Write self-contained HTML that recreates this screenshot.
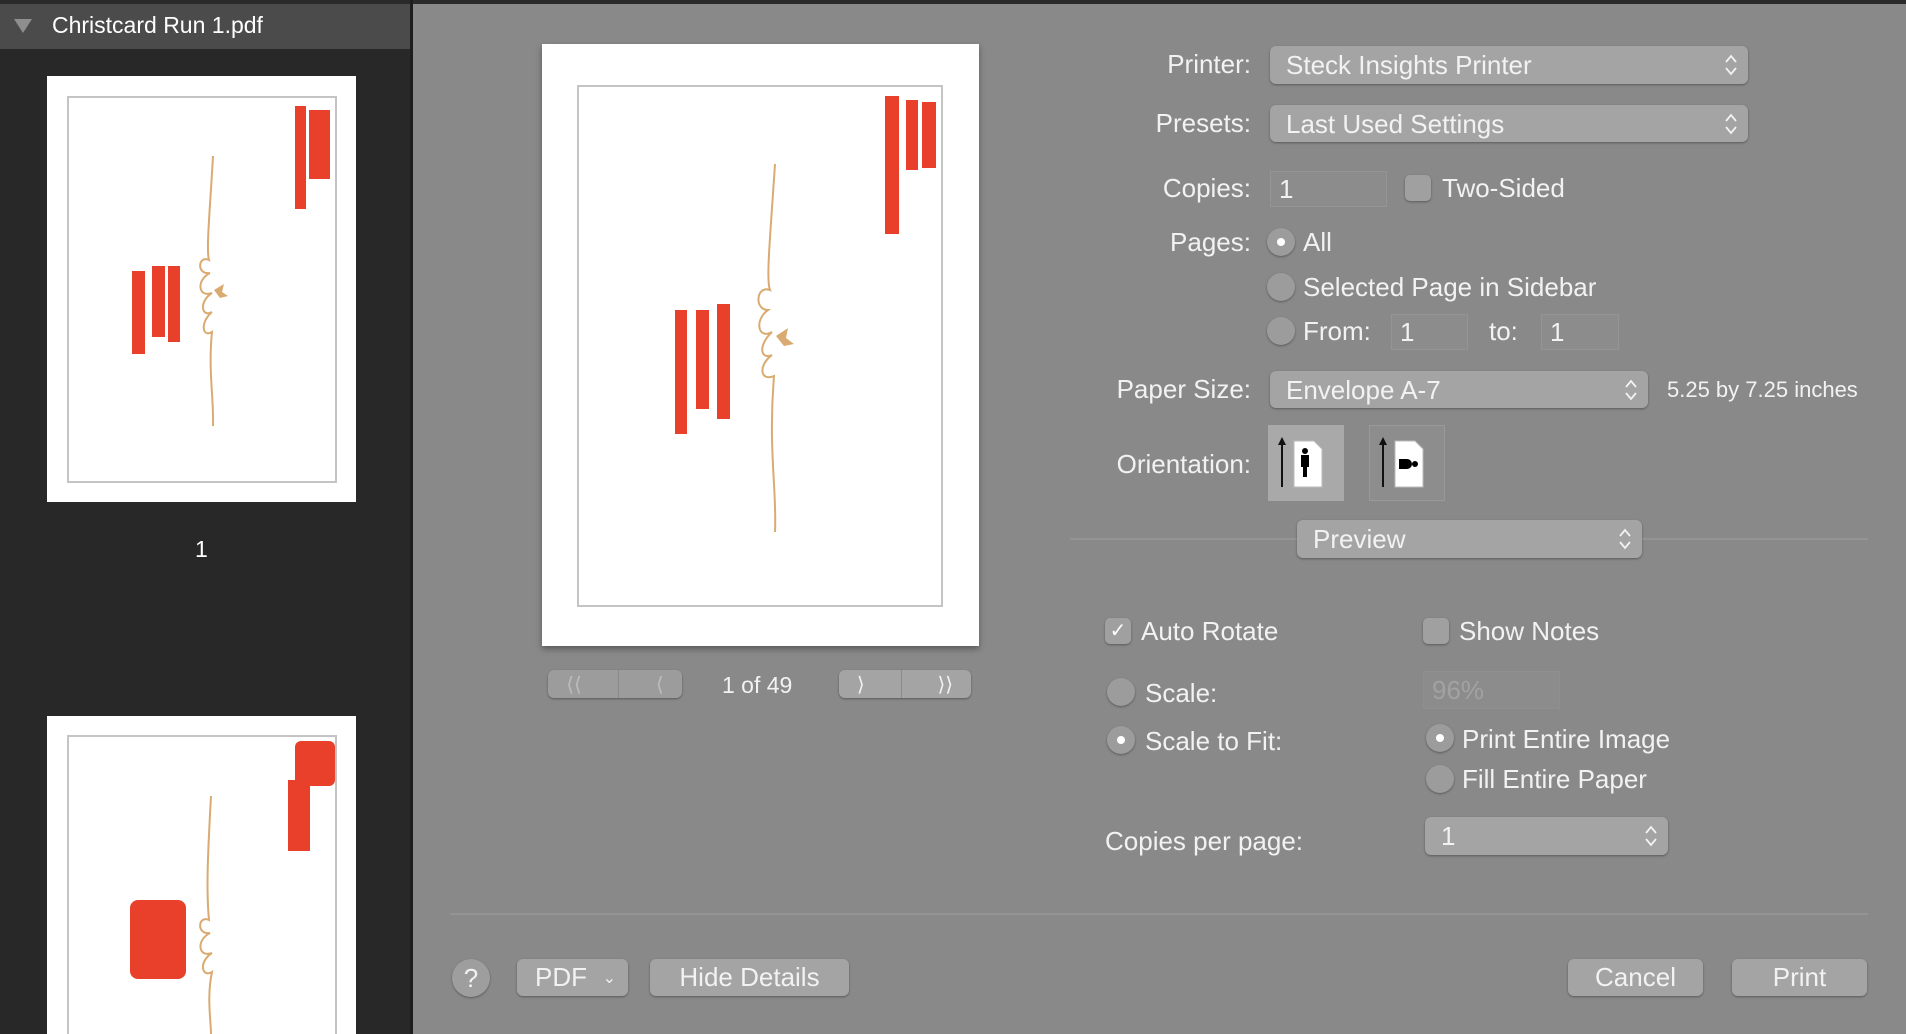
<!DOCTYPE html>
<html style="width:1906px;height:1034px;overflow:hidden"><head><meta charset="utf-8"><style>
*{margin:0;padding:0;box-sizing:border-box}
body{width:1906px;height:1034px;overflow:hidden;background:#898989;font-family:"Liberation Sans",sans-serif;color:#f2f2f2;position:relative}
.a{position:absolute}
.lbl{position:absolute;font-size:26px;white-space:nowrap}
.r{text-align:right;width:300px}
.pop{position:absolute;background:#a4a4a4;border-radius:6px;box-shadow:0 1px 2px rgba(0,0,0,.35);font-size:26px;padding-left:16px;line-height:1;display:flex;align-items:center}
.pop .ar{position:absolute;right:10px;top:50%;transform:translateY(-50%);width:14px;height:26px}
.fld{position:absolute;background:#8c8c8c;border:1px solid #959595;font-size:26px;padding-left:8px;display:flex;align-items:center}
.cb{position:absolute;width:26px;height:26px;background:#a0a0a0;border-radius:5px;box-shadow:0 1px 2px rgba(0,0,0,.35)}
.rd{position:absolute;width:28px;height:28px;border-radius:50%;background:#9c9c9c;box-shadow:0 1px 2px rgba(0,0,0,.35)}
.rd.on::after{content:"";position:absolute;left:10px;top:10px;width:8px;height:8px;border-radius:50%;background:#fff}
.btn{position:absolute;background:#a4a4a4;border-radius:6px;box-shadow:0 1px 2px rgba(0,0,0,.35);font-size:26px;display:flex;align-items:center;justify-content:center}
.red{position:absolute;background:#e8402a}
</style></head><body>
<div class="a" style="left:0;top:0;width:1906px;height:4px;background:#2a2a2a"></div>
<div class="a" style="left:0;top:4px;width:410px;height:1030px;background:#282828;overflow:hidden">
<div class="a" style="left:0;top:0;width:410px;height:45px;background:#4b4b4b"></div>
<div class="a" style="left:47px;top:712px;width:309px;height:330px;background:#fff"></div>
<div class="a" style="left:67px;top:731px;width:270px;height:320px;border:2px solid #c4c4c4"></div>
<div class="red" style="left:295px;top:737px;width:40px;height:45px;border-radius:6px"></div>
<div class="red" style="left:288px;top:776px;width:22px;height:71px"></div>
<div class="red" style="left:130px;top:896px;width:56px;height:79px;border-radius:8px"></div>
<svg class="a" style="left:190px;top:786px" width="50" height="250"><path d="M21 6 C18 60 16 100 19 130 C8 125 6 145 20 143 C6 150 8 168 22 163 C8 172 12 188 22 182 C16 210 22 235 21 250" fill="none" stroke="#d9ab70" stroke-width="2"/></svg>
</div>
<div class="a" style="left:410px;top:0;width:3px;height:1034px;background:#1e1e1e"></div>
<div class="a" style="left:14px;top:19px;width:0;height:0;border-left:9px solid transparent;border-right:9px solid transparent;border-top:14px solid #8e8e8e"></div>
<div class="lbl" style="left:52px;top:12px;font-size:23px;color:#fff">Christcard Run 1.pdf</div>
<div class="a" style="left:47px;top:76px;width:309px;height:426px;background:#fff"></div>
<div class="a" style="left:67px;top:96px;width:270px;height:387px;border:2px solid #c4c4c4"></div>
<div class="red" style="left:295px;top:106px;width:11px;height:103px"></div>
<div class="red" style="left:309px;top:110px;width:21px;height:69px"></div>
<div class="red" style="left:132px;top:271px;width:13px;height:83px"></div>
<div class="red" style="left:152px;top:266px;width:13px;height:71px"></div>
<div class="red" style="left:168px;top:266px;width:12px;height:76px"></div>
<svg class="a" style="left:190px;top:150px" width="50" height="280"><path d="M23 6 C20 60 16 100 19 110 C8 105 6 125 20 123 C6 130 8 148 22 143 C8 152 12 168 22 162 C10 172 12 188 22 182 C18 220 24 250 23 276" fill="none" stroke="#d9ab70" stroke-width="2"/><path d="M24 140 l10 -6 l-2 8 l6 4 l-8 2 z" fill="#d9ab70"/></svg>
<div class="lbl" style="left:195px;top:536px;font-size:23px;color:#fff">1</div>
<div class="a" style="left:542px;top:44px;width:437px;height:602px;background:#fff;box-shadow:0 3px 6px rgba(0,0,0,.35)"></div>
<div class="a" style="left:577px;top:85px;width:366px;height:522px;border:2px solid #c4c4c4"></div>
<div class="red" style="left:885px;top:96px;width:14px;height:138px"></div>
<div class="red" style="left:906px;top:100px;width:12px;height:70px"></div>
<div class="red" style="left:922px;top:102px;width:14px;height:66px"></div>
<div class="red" style="left:675px;top:310px;width:12px;height:124px"></div>
<div class="red" style="left:696px;top:310px;width:13px;height:99px"></div>
<div class="red" style="left:717px;top:304px;width:13px;height:115px"></div>
<svg class="a" style="left:750px;top:160px" width="60" height="375"><path d="M25 4 C20 80 16 120 20 130 C6 125 4 150 18 150 C4 160 8 180 22 172 C8 185 10 200 22 195 C8 205 10 222 24 216 C18 290 27 330 25 372" fill="none" stroke="#d9ab70" stroke-width="2"/><path d="M26 176 l12 -8 l-2 10 l8 6 l-10 2 z" fill="#d9ab70"/></svg>
<div class="btn" style="left:548px;top:670px;width:134px;height:28px;background:#9c9c9c;color:#bcbcbc;font-size:20px;justify-content:space-around">&#10216;&#10216;<span style="width:1px;height:28px;background:#8a8a8a"></span>&#10216;</div>
<div class="lbl" style="left:722px;top:672px;font-size:23px">1 of 49</div>
<div class="btn" style="left:839px;top:670px;width:132px;height:28px;font-size:20px;justify-content:space-around">&#10217;<span style="width:1px;height:28px;background:#8a8a8a"></span>&#10217;&#10217;</div>
<div class="lbl r" style="left:951px;top:49px">Printer:</div>
<div class="lbl r" style="left:951px;top:108px">Presets:</div>
<div class="lbl r" style="left:951px;top:173px">Copies:</div>
<div class="lbl r" style="left:951px;top:227px">Pages:</div>
<div class="lbl r" style="left:951px;top:374px">Paper Size:</div>
<div class="lbl r" style="left:951px;top:449px">Orientation:</div>
<svg width="0" height="0" style="position:absolute"><defs><symbol id="ud" viewBox="0 0 14 26"><path d="M2 10 L7 4 L12 10 M2 16 L7 22 L12 16" fill="none" stroke="#f2f2f2" stroke-width="1.8"/></symbol></defs></svg>
<div class="pop" style="left:1270px;top:46px;width:478px;height:38px">Steck Insights Printer<svg class="ar"><use href="#ud"/></svg></div>
<div class="pop" style="left:1270px;top:105px;width:478px;height:37px">Last Used Settings<svg class="ar"><use href="#ud"/></svg></div>
<div class="fld" style="left:1270px;top:171px;width:117px;height:36px">1</div>
<div class="cb" style="left:1405px;top:175px"></div>
<div class="lbl" style="left:1442px;top:173px">Two-Sided</div>
<div class="rd on" style="left:1267px;top:228px"></div>
<div class="lbl" style="left:1303px;top:227px">All</div>
<div class="rd" style="left:1267px;top:273px"></div>
<div class="lbl" style="left:1303px;top:272px">Selected Page in Sidebar</div>
<div class="rd" style="left:1267px;top:317px"></div>
<div class="lbl" style="left:1303px;top:316px">From:</div>
<div class="fld" style="left:1391px;top:314px;width:77px;height:36px">1</div>
<div class="lbl" style="left:1489px;top:316px">to:</div>
<div class="fld" style="left:1541px;top:314px;width:78px;height:36px">1</div>
<div class="pop" style="left:1270px;top:371px;width:378px;height:37px">Envelope A-7<svg class="ar"><use href="#ud"/></svg></div>
<div class="lbl" style="left:1667px;top:377px;font-size:22px">5.25 by 7.25 inches</div>
<div class="a" style="left:1268px;top:425px;width:76px;height:76px;background:#a9a9a9"></div>
<div class="a" style="left:1369px;top:425px;width:76px;height:76px;border:1px solid #999;background:#8d8d8d"></div>
<svg class="a" style="left:1278px;top:435px" width="60" height="60"><path d="M4 2 l-4 8 h3 v42 h2 v-42 h3z" fill="#111"/><path d="M16 6 h20 l8 8 v38 h-28z" fill="#fff" stroke="#bbb"/><circle cx="27" cy="16" r="3" fill="#000"/><path d="M23 20 h8 v12 h-2 v10 h-4 v-10 h-2z" fill="#000"/></svg>
<svg class="a" style="left:1379px;top:435px" width="60" height="60"><path d="M4 2 l-4 8 h3 v42 h2 v-42 h3z" fill="#111"/><path d="M16 6 h20 l8 8 v38 h-28z" fill="#fff" stroke="#bbb"/><path d="M20 24 h8 a5 5 0 0 1 0 10 h-8z" fill="#000"/><circle cx="36" cy="29" r="3" fill="#000"/></svg>
<div class="a" style="left:1070px;top:538px;width:798px;height:2px;background:#949494"></div>
<div class="pop" style="left:1297px;top:520px;width:345px;height:38px">Preview<svg class="ar"><use href="#ud"/></svg></div>
<div class="cb" style="left:1105px;top:618px;color:#fff;font-size:20px;text-align:center;line-height:26px">&#10003;</div>
<div class="lbl" style="left:1141px;top:616px">Auto Rotate</div>
<div class="cb" style="left:1423px;top:618px"></div>
<div class="lbl" style="left:1459px;top:616px">Show Notes</div>
<div class="rd" style="left:1107px;top:678px"></div>
<div class="lbl" style="left:1145px;top:678px">Scale:</div>
<div class="fld" style="left:1423px;top:671px;width:137px;height:38px;color:#a2a2a2;border-color:#8f8f8f">96%</div>
<div class="rd on" style="left:1107px;top:726px"></div>
<div class="lbl" style="left:1145px;top:726px">Scale to Fit:</div>
<div class="rd on" style="left:1426px;top:724px"></div>
<div class="lbl" style="left:1462px;top:724px">Print Entire Image</div>
<div class="rd" style="left:1426px;top:765px"></div>
<div class="lbl" style="left:1462px;top:764px">Fill Entire Paper</div>
<div class="lbl" style="left:1105px;top:826px">Copies per page:</div>
<div class="pop" style="left:1425px;top:817px;width:243px;height:38px">1<svg class="ar"><use href="#ud"/></svg></div>
<div class="a" style="left:450px;top:913px;width:1418px;height:2px;background:#949494"></div>
<div class="btn" style="left:452px;top:959px;width:38px;height:38px;border-radius:50%;background:#9e9e9e">?</div>
<div class="btn" style="left:517px;top:959px;width:111px;height:37px;justify-content:flex-start;padding-left:18px">PDF<span style="position:absolute;right:12px;font-size:16px">&#8964;</span></div>
<div class="btn" style="left:650px;top:959px;width:199px;height:37px">Hide Details</div>
<div class="btn" style="left:1568px;top:959px;width:135px;height:37px">Cancel</div>
<div class="btn" style="left:1732px;top:959px;width:135px;height:37px">Print</div>
</body></html>
